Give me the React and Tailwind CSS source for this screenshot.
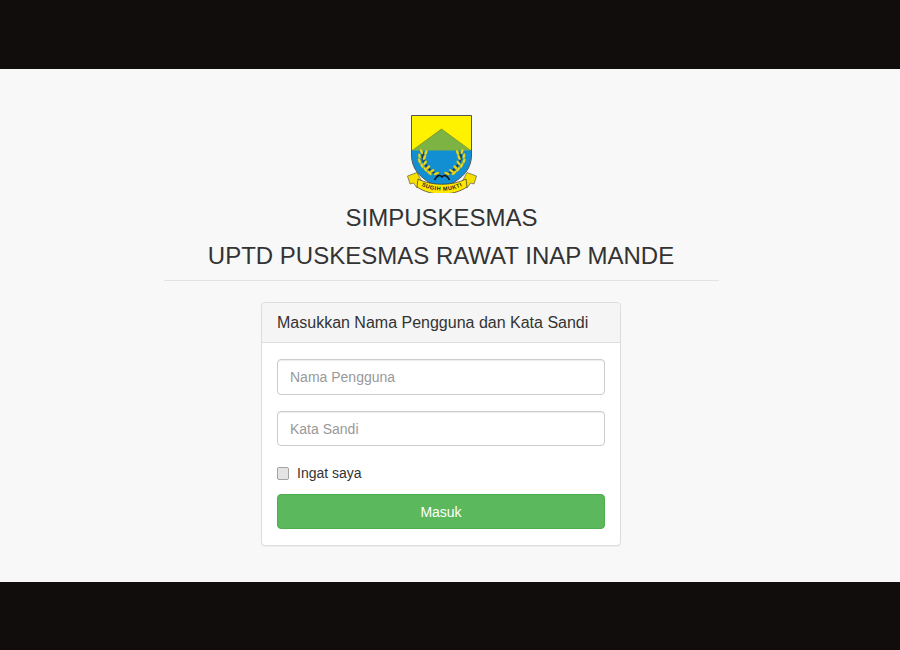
import React from "react";

// positions of the laurel leaves on the left branch, right branch is mirrored
const leaves = [
  [14.5, 36.5, 70], [19, 37.5, 110], [12.5, 41, 80], [17.5, 42.5, 115], [12.5, 46, 70], [18, 48, 125],
  [15, 50.5, 60], [21, 52.5, 135], [18.5, 54.5, 50], [25, 56, 145], [22.5, 58, 40], [29.5, 58.5, 160],
];

const Laurel = () => (
  <g>
    <path d="M16 37 C14 46 20 55 31 60" fill="none" stroke="#123f66" strokeWidth="2.2" />
    {leaves.map(([x, y, r], i) => (
      <ellipse key={i} cx={x} cy={y} rx="2.9" ry="1.35" fill="#ecd91f" stroke="#6f8a2e" strokeWidth="0.25" transform={`rotate(${r} ${x} ${y})`} />
    ))}
  </g>
);

// Crest drawn by hand, 70x78 box
const Crest = () => (
  <svg width="70" height="78" viewBox="0 0 70 78" className="block">
    <path d="M4.5 0.5 H64.5 V40 C64.5 55 54 66 34.5 73 C15 66 4.5 55 4.5 40 Z" fill="#128fd2" stroke="#555" strokeWidth="1" />
    <path d="M5 1 H64 V35 H5 Z" fill="#fff200" />
    <path d="M5.5 35.5 L34.5 14 L63.5 35.5 Z" fill="#7cb342" />
    <path d="M5 35.5 L34.5 14 L64 35.5" fill="none" stroke="#4a6b2a" strokeWidth="0.5" />
    <Laurel />
    <g transform="matrix(-1 0 0 1 69.5 0)">
      <Laurel />
    </g>
    <path d="M27.5 65 C30 60 33 59.5 35 62 C37 59.5 40 60 42.5 65" fill="none" stroke="#111" strokeWidth="1.6" />
    <path d="M0.5 61 L10 57.5 L15 67 L10 73 L6.5 68 L3 69 Z" fill="#f6e000" stroke="#444" strokeWidth="0.6" />
    <path d="M69.5 61 L60 57.5 L55 67 L60 73 L63.5 68 L67 69 Z" fill="#f6e000" stroke="#444" strokeWidth="0.6" />
    <path d="M11 64 C24 71 46 71 59 64 L60 72 C46 81.5 24 81.5 10 72 Z" fill="#ffe600" stroke="#333" strokeWidth="0.7" />
    <path id="ribbon" d="M13 70 C26 77.5 44 77.5 57 70" fill="none" />
    <text fontSize="5.6" fontWeight="700" fill="#222" fontFamily="Liberation Sans, sans-serif" letterSpacing="0.5">
      <textPath href="#ribbon" startOffset="50%" textAnchor="middle">SUGIH MUKTI</textPath>
    </text>
  </svg>
);

export default function App() {
  return (
    <div className="flex h-[650px] w-[900px] flex-col bg-[#110d0c] font-['Liberation_Sans',Arial,sans-serif] text-[#333333]">
      <div className="h-[69px] shrink-0" />
      <main className="h-[513px] shrink-0 bg-[#f8f8f8] pt-[46px]">
        <div className="ml-[164px] w-[555px]">
          <div className="flex justify-center pl-px">
            <Crest />
          </div>
          <h3 className="mt-[12px] text-center text-[24px] leading-[26px]">SIMPUSKESMAS</h3>
          <h3 className="mt-3 text-center text-[24px] leading-[26px] -ml-px">UPTD PUSKESMAS RAWAT INAP MANDE</h3>
          <hr className="mt-[11px] border-t border-[#e3e3e3]" />

          <div className="ml-[97px] mt-[21px] w-[360px] rounded border border-[#dddddd] bg-white shadow-[0_1px_1px_rgba(0,0,0,0.05)]">
            <div className="h-10 rounded-t border-b border-[#dddddd] bg-[#f5f5f5] px-[15px] pt-[11px] text-[16px] leading-[18px]">
              Masukkan Nama Pengguna dan Kata Sandi
            </div>
            <div className="px-[15px] pt-[16px] pb-[16px]">
              <input
                placeholder="Nama Pengguna"
                className="block h-[36px] w-full rounded border border-[#cccccc] bg-white px-3 text-[14px] shadow-[inset_0_1px_1px_rgba(0,0,0,0.075)] placeholder:text-[#999999]"
              />
              <input
                placeholder="Kata Sandi"
                className="mt-[16px] block h-[35px] w-full rounded border border-[#cccccc] bg-white px-3 text-[14px] shadow-[inset_0_1px_1px_rgba(0,0,0,0.075)] placeholder:text-[#999999]"
              />
              <label className="mt-[18px] flex h-[18px] items-center text-[14px] leading-5">
                <span className="h-[13px] w-[12px] rounded-[2px] border border-[#a3a3a3] bg-[#e4e4e4]" />
                <span className="ml-2">Ingat saya</span>
              </label>
              <button className="mt-[12px] block h-[35px] w-full rounded border border-[#4cae4c] bg-[#5cb85c] pt-px text-[14px] font-normal text-white">
                Masuk
              </button>
            </div>
          </div>
        </div>
      </main>
      <div className="flex-1" />
    </div>
  );
}
